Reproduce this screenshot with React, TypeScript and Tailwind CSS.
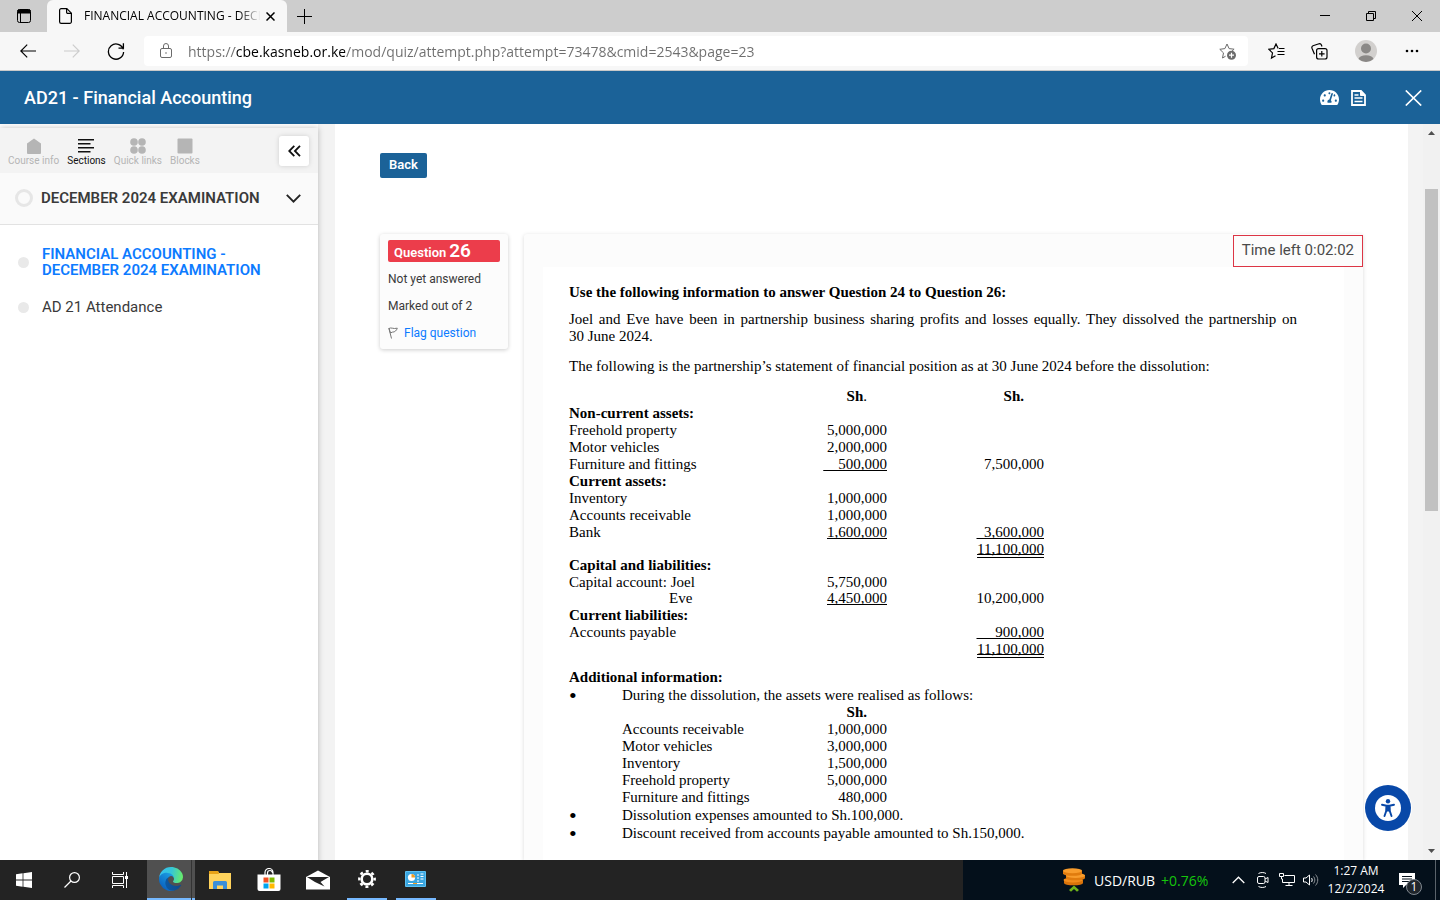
import type { ReactNode } from "react";
import { FaTachometerAlt } from "react-icons/fa";

interface Row {
  label: string;
  a?: string;
  b?: string;
  bold?: boolean;
  indent?: boolean;
  tight?: boolean;
  lineA?: boolean;
  lineB?: "single" | "double";
}

const NB = "\u00a0";

const statement: Row[] = [
  { label: "Non-current assets:", bold: true },
  { label: "Freehold property", a: "5,000,000" },
  { label: "Motor vehicles", a: "2,000,000" },
  { label: "Furniture and fittings", a: NB.repeat(4) + "500,000", b: "7,500,000", lineA: true },
  { label: "Current assets:", bold: true },
  { label: "Inventory", a: "1,000,000" },
  { label: "Accounts receivable", a: "1,000,000" },
  { label: "Bank", a: "1,600,000", b: NB.repeat(2) + "3,600,000", lineA: true, lineB: "single" },
  { label: "", b: "11,100,000", lineB: "double", tight: true },
  { label: "Capital and liabilities:", bold: true },
  { label: "Capital account: Joel", a: "5,750,000", tight: true },
  { label: "Eve", a: "4,450,000", b: "10,200,000", indent: true, lineA: true },
  { label: "Current liabilities:", bold: true },
  { label: "Accounts payable", b: NB.repeat(5) + "900,000", lineB: "single" },
  { label: "", b: "11,100,000", lineB: "double" },
];

const realised = [
  ["Accounts receivable", "1,000,000"],
  ["Motor vehicles", "3,000,000"],
  ["Inventory", "1,500,000"],
  ["Freehold property", "5,000,000"],
  ["Furniture and fittings", "480,000"],
];

function TabStrip() {
  return (
    <div className="flex h-8 shrink-0 items-stretch bg-[#cdcdcd] text-black">
      <button aria-label="Tab actions" className="flex w-[47px] items-center justify-center">
        <svg width="14" height="14" viewBox="0 0 14 14" fill="none" stroke="currentColor">
          <rect x="0.5" y="0.5" width="13" height="13" rx="2" />
          <path d="M1 1h12v3H1z" fill="currentColor" />
          <path d="M3.5 4v9" />
        </svg>
      </button>
      <div role="tab" aria-selected="true" className="flex w-60 items-center rounded-t-md bg-[#f7f7f7] pl-3">
        <svg width="13" height="16" viewBox="0 0 13 16" fill="none" stroke="currentColor" strokeWidth="1.2">
          <path d="M2.5.6h5.3l4.6 4.6v8.6a1.6 1.6 0 0 1-1.6 1.6H2.2a1.6 1.6 0 0 1-1.6-1.6V2.2A1.6 1.6 0 0 1 2.2.6z" />
          <path d="M7.6.8v3.4a1.2 1.2 0 0 0 1.2 1.2h3.4" />
        </svg>
        <span className="ml-3 w-[182px] whitespace-nowrap bg-linear-to-r from-black from-85% to-transparent to-97% bg-clip-text text-[12px] text-transparent">
          FINANCIAL ACCOUNTING - DECE
        </span>
        <button aria-label="Close tab">
          <svg width="9" height="9" viewBox="0 0 9 9" stroke="currentColor" strokeWidth="1.5">
            <path d="M.5.5l8 8M8.5.5l-8 8" />
          </svg>
        </button>
      </div>
      <button aria-label="New tab" className="flex w-[35px] items-center justify-center">
        <svg width="15" height="15" viewBox="0 0 15 15" stroke="currentColor">
          <path d="M0 7.5h15M7.5 0v15" />
        </svg>
      </button>
      <div className="ml-auto flex">
        <button aria-label="Minimize" className="flex w-[46px] items-center justify-center">
          <svg width="10" height="10" viewBox="0 0 10 10" stroke="currentColor"><path d="M0 4.5h10" /></svg>
        </button>
        <button aria-label="Restore" className="flex w-[46px] items-center justify-center">
          <svg width="10" height="10" viewBox="0 0 10 10" fill="none" stroke="currentColor">
            <path d="M.5 2.5h7v7h-7zM2.5 2.5v-2h7v7h-2" />
          </svg>
        </button>
        <button aria-label="Close window" className="flex w-[46px] items-center justify-center">
          <svg width="10" height="10" viewBox="0 0 10 10" stroke="currentColor"><path d="M0 0l10 10M10 0L0 10" /></svg>
        </button>
      </div>
    </div>
  );
}

const STAR = "M8 1l2.1 4.6 5 .6-3.7 3.4M6.6 13.2L3.5 15l1-5.1L.8 6.3l5.1-.7L8 1";

function AddressBar() {
  return (
    <div className="flex h-[39px] shrink-0 items-center border-b border-[#c9c9c9] bg-[#f7f7f7] text-black">
      <button aria-label="Go back" className="ml-5 w-4">
        <svg width="16" height="14" viewBox="0 0 16 14" fill="none" stroke="currentColor" strokeWidth="1.2">
          <path d="M16 7H1M7.2.6L.8 7l6.4 6.4" />
        </svg>
      </button>
      <button aria-label="Go forward" disabled className="ml-7 w-4 text-[#cccccc]">
        <svg width="16" height="14" viewBox="0 0 16 14" fill="none" stroke="currentColor" strokeWidth="1.2">
          <path d="M0 7h15M8.8.6L15.2 7l-6.4 6.4" />
        </svg>
      </button>
      <button aria-label="Reload" className="ml-[27px] w-[18px]">
        <svg width="18" height="18" viewBox="0 0 18 18" fill="none" stroke="currentColor" strokeWidth="1.3">
          <path d="M16.3 7.4A7.6 7.6 0 1 0 16.6 10M16.4 1.2v4.9h-4.9" />
        </svg>
      </button>
      <div className="ml-[19px] flex h-[30px] min-w-0 flex-1 items-center rounded-[4px] bg-white pl-4 pr-[11px]">
        <svg className="shrink-0 text-[#6b6b6b]" width="12" height="16" viewBox="0 0 12 16" fill="none" stroke="currentColor">
          <rect x="0.5" y="5.5" width="11" height="9" rx="1.5" />
          <path d="M3.5 5.5V3a2.5 2.5 0 0 1 5 0v2.5" />
          <circle cx="6" cy="10" r="0.8" fill="currentColor" stroke="none" />
        </svg>
        <input
          aria-label="Address"
          defaultValue="https://cbe.kasneb.or.ke/mod/quiz/attempt.php?attempt=73478&cmid=2543&page=23"
          className="ml-4 min-w-0 flex-1 bg-[linear-gradient(90deg,#6e6e6e_47px,#000_47px,#000_157px,#6e6e6e_157px)] bg-clip-text text-[14px] text-transparent outline-none"
        />
        <button aria-label="Add to favorites" className="text-[#6b6b6b]">
          <svg width="18" height="17" viewBox="0 0 18 17" fill="none" stroke="currentColor">
            <path d={STAR} />
            <circle cx="12.5" cy="12.2" r="4.5" fill="currentColor" stroke="none" />
            <path d="M12.5 9.7v5M10 12.2h5" stroke="#fff" strokeWidth="1.2" />
          </svg>
        </button>
      </div>
      <button aria-label="Favorites" className="ml-5">
        <svg width="17" height="17" viewBox="0 0 17 17" fill="none" stroke="currentColor" strokeWidth="1.2">
          <path d="M10.2 5.6L8 1 5.9 5.6l-5.1.7 3.7 3.6-1 5.1 4-2.2M11 5.5h5.5M9.5 8.5h7M9.5 11.5h7" />
        </svg>
      </button>
      <button aria-label="Collections" className="ml-[26px]">
        <svg width="17" height="17" viewBox="0 0 17 17" fill="none" stroke="currentColor" strokeWidth="1.2">
          <rect x="5.6" y="5.6" width="10.4" height="10.4" rx="2" />
          <path d="M10.8 8v5.6M8 10.8h5.6M3.5 11.3L1 5.2a2 2 0 0 1 1-2.5L8 .8a2 2 0 0 1 2.4 1.2l.6 1.5" />
        </svg>
      </button>
      <button aria-label="Profile" className="ml-[27px]">
        <svg width="22" height="22" viewBox="0 0 22 22">
          <circle cx="11" cy="11" r="11" fill="#d2d0ce" />
          <circle cx="11" cy="8.5" r="5" fill="#8a8886" />
          <path d="M3.5 19a7.7 4.8 0 0 1 15 0 11 11 0 0 1-15 0z" fill="#8a8886" />
        </svg>
      </button>
      <button aria-label="Settings and more" className="ml-7 mr-[21px]">
        <svg width="14" height="4" viewBox="0 0 14 4" fill="currentColor">
          <circle cx="2" cy="2" r="1.3" /><circle cx="7" cy="2" r="1.3" /><circle cx="12" cy="2" r="1.3" />
        </svg>
      </button>
    </div>
  );
}

function CourseHeader() {
  return (
    <header className="flex h-[53px] shrink-0 items-center bg-[#1b6298] pl-6 pr-[18px] font-[Roboto,sans-serif] text-white">
      <h1 className="text-[18px] font-medium">AD21 - Financial Accounting</h1>
      <button aria-label="Dashboard" className="ml-auto">
        <FaTachometerAlt size={19} />
      </button>
      <button aria-label="Report" className="ml-3">
        <svg width="15" height="16" viewBox="0 0 15 16" fill="none" stroke="currentColor" strokeWidth="1.8">
          <path d="M1 1h9l4 4v10H1z" />
          <path d="M9.5 1v4.5H14z" fill="currentColor" strokeWidth="1" />
          <path d="M3.5 5h4M3.5 8h8M3.5 11.5h8" strokeWidth="1.5" />
        </svg>
      </button>
      <button aria-label="Exit activity" className="ml-[39px]">
        <svg width="17" height="16" viewBox="0 0 17 16" stroke="currentColor" strokeWidth="1.7">
          <path d="M.8.5l15.4 15M16.2.5L.8 15.5" />
        </svg>
      </button>
    </header>
  );
}

function SideTab({ label, active, children }: { label: string; active?: boolean; children: ReactNode }) {
  return (
    <button className={active ? "flex flex-col items-center text-[#111111]" : "flex flex-col items-center text-[#b5b5b5]"}>
      <svg width="16" height="16" viewBox="0 0 16 16" fill="currentColor">{children}</svg>
      <span className="whitespace-nowrap text-[10px] leading-[14px]">{label}</span>
    </button>
  );
}

function Sidebar() {
  return (
    <aside className="mt-1 h-full w-[318px] bg-white text-[15px] leading-4 text-[#3a3a3a] shadow-[0_0_6px_rgba(0,0,0,0.25)]">
      <div className="flex h-[45px] items-center bg-[#f3f3f3] pl-2 pr-[9px]">
        <div className="flex gap-2 pt-1">
          <SideTab label="Course info"><path d="M8 0.5l7 5V15a1 1 0 0 1-1 1H2a1 1 0 0 1-1-1V5.5z" /></SideTab>
          <SideTab label="Sections" active>
            <path d="M0 1h16v1.6H0zM0 5h12.5v1.6H0zM0 9h16v1.6H0zM0 13h12.5v1.6H0z" />
          </SideTab>
          <SideTab label="Quick links">
            <circle cx="4" cy="4" r="3.8" /><circle cx="12" cy="4" r="3.8" />
            <circle cx="4" cy="12" r="3.8" /><circle cx="12" cy="12" r="3.8" />
          </SideTab>
          <SideTab label="Blocks"><rect x="0.5" y="0.5" width="15" height="15" rx="1" /></SideTab>
        </div>
        <button aria-label="Collapse" className="ml-auto flex size-[30px] items-center justify-center rounded-[3px] bg-white shadow-[0_0_5px_rgba(0,0,0,0.15)]">
          <svg width="13" height="12" viewBox="0 0 13 12" fill="none" stroke="#111" strokeWidth="1.8">
            <path d="M6.3.8L1.2 6l5.1 5.2M12 .8L6.9 6l5.1 5.2" />
          </svg>
        </button>
      </div>
      <div className="flex h-[52px] items-center border-b border-[#e2e2e2] bg-[#fafafa] pb-px pl-[15px] pr-[17px]">
        <span className="size-[18px] rounded-full border-3 border-[#e6e6e6]" />
        <h2 className="ml-2 whitespace-nowrap font-semibold">DECEMBER 2024 EXAMINATION</h2>
        <svg className="ml-auto" width="15" height="9" viewBox="0 0 15 9" fill="none" stroke="#222" strokeWidth="1.9">
          <path d="M.8.9l6.7 6.7L14.2.9" />
        </svg>
      </div>
      <nav className="flex flex-col gap-[21px] pl-[18px] pr-10 pt-[21px]">
        <a href="#exam" className="flex items-center gap-[13px] font-semibold text-[#0d7bff]">
          <span className="size-[11px] shrink-0 rounded-full bg-[#e9e9e9]" />
          FINANCIAL ACCOUNTING - DECEMBER 2024 EXAMINATION
        </a>
        <a href="#attendance" className="flex items-center gap-[13px]">
          <span className="size-[11px] shrink-0 rounded-full bg-[#e9e9e9]" />
          AD 21 Attendance
        </a>
      </nav>
    </aside>
  );
}

function QuestionInfo() {
  return (
    <section className="flex w-32 shrink-0 flex-col gap-[11px] self-start rounded-[3px] bg-[#fcfcfc] px-2 pb-2 pt-[6px] text-[12px] leading-4 text-[#3a3a3a] shadow-[0_1px_4px_rgba(0,0,0,0.2)]">
      <h3 className="-mb-[2px] flex h-[22px] items-baseline gap-[3px] rounded-[2px] bg-[#ec3d4b] px-[6px] leading-[22px] text-white">
        <span className="text-[13px] font-semibold">Question</span>
        <span className="text-[19px] font-semibold">26</span>
      </h3>
      <p>Not yet answered</p>
      <p>Marked out of 2</p>
      <a href="#flag" className="flex items-center gap-[6px] text-[#0d7bff]">
        <svg width="10" height="12" viewBox="0 0 10 12" fill="none" stroke="#777">
          <path d="M.8 1l2.7 10.500M1 1.500c2-1.500 4 .8 8.300-.3C8.500 3.500 7 5 4.500 5.200" />
          <path d="M1 1.500l1.500 4.500 2-1" />
        </svg>
        Flag question
      </a>
    </section>
  );
}

function lineClass(line?: "single" | "double") {
  if (line === "single") return "underline underline-offset-1 [text-decoration-skip-ink:none]";
  if (line === "double") return "underline decoration-double underline-offset-0 [text-decoration-skip-ink:none]";
  return "";
}

function QuestionText() {
  return (
    <div className="mx-[19px] flex-1 bg-white pl-[26px] pr-[47px] pt-[17px] font-['Liberation_Serif',serif] text-[15px] leading-[17px] text-black">
      <p className="font-bold">Use the following information to answer Question 24 to Question 26:</p>
      <p className="mt-[10px] text-justify">
        {`Joel and Eve have been in partnership business sharing profits and losses equally. They dissolved the partnership on 30${NB}June${NB}2024.`}
      </p>
      <p className="mt-[13px]">
        The following is the partnership’s statement of financial position as at 30 June 2024 before the dissolution:
      </p>

      <table className="mt-[13px] table-fixed border-collapse whitespace-nowrap">
        <colgroup>
          <col className="w-[238px]" />
          <col className="w-20" />
          <col className="w-[157px]" />
        </colgroup>
        <thead>
          <tr>
            <td className="p-0" />
            <th scope="col" className="p-0 pr-5 text-right">Sh<span className="font-normal">.</span></th>
            <th scope="col" className="p-0 pr-5 text-right">Sh.</th>
          </tr>
        </thead>
        <tbody>
          {statement.map((r, i) => (
            <tr key={i} className={r.tight ? "leading-4" : "h-[17px]"}>
              <th
                scope="row"
                className={`p-0 text-left ${r.bold ? "font-bold" : "font-normal"} ${r.indent ? "pl-[100px]" : ""}`}
              >
                {r.label}
              </th>
              <td className="p-0 text-right"><span className={lineClass(r.lineA ? "single" : undefined)}>{r.a}</span></td>
              <td className="p-0 text-right"><span className={lineClass(r.lineB)}>{r.b}</span></td>
            </tr>
          ))}
        </tbody>
      </table>

      <h4 className="mt-[11px] font-bold">Additional information:</h4>
      <ul className="mt-px flex flex-col gap-px">
        <li className="flex">
          <span className="w-[53px] shrink-0 text-[22px]">•</span>
          <div>
            During the dissolution, the assets were realised as follows:
            <table className="table-fixed border-collapse whitespace-nowrap">
              <colgroup>
                <col className="w-[185px]" />
                <col className="w-20" />
              </colgroup>
              <thead>
                <tr>
                  <td className="p-0" />
                  <th scope="col" className="p-0 pr-5 text-right">Sh.</th>
                </tr>
              </thead>
              <tbody>
                {realised.map(([name, amount]) => (
                  <tr key={name}>
                    <th scope="row" className="p-0 text-left font-normal">{name}</th>
                    <td className="p-0 text-right">{amount}</td>
                  </tr>
                ))}
              </tbody>
            </table>
          </div>
        </li>
        <li className="flex">
          <span className="w-[53px] shrink-0 text-[22px]">•</span>
          Dissolution expenses amounted to Sh.100,000.
        </li>
        <li className="flex">
          <span className="w-[53px] shrink-0 text-[22px]">•</span>
          Discount received from accounts payable amounted to Sh.150,000.
        </li>
      </ul>
    </div>
  );
}

function Scrollbar() {
  return (
    <div className="flex w-[17px] shrink-0 flex-col items-center bg-[#f1f1f1] text-[#505050]">
      <svg width="17" height="17" viewBox="0 0 17 17" fill="currentColor"><path d="M5 11l3.5-4L12 11z" /></svg>
      <div className="flex-[48]" />
      <div className="w-[13px] flex-[322] bg-[#c1c1c1]" />
      <div className="flex-[332]" />
      <svg width="17" height="17" viewBox="0 0 17 17" fill="currentColor"><path d="M5 6l3.5 4L12 6z" /></svg>
    </div>
  );
}

function TaskButton({ label, open, active, children }: { label: string; open?: boolean; active?: boolean; children: ReactNode }) {
  return (
    <button
      aria-label={label}
      className={`relative flex flex-col items-center ${active ? "w-12 bg-[#505050]" : "w-[49px]"}`}
    >
      <span className="flex flex-1 items-center">{children}</span>
      {(open || active) && <span className={`h-[2px] bg-[#76b9ff] ${active ? "w-full" : "w-10"}`} />}
      {active && <span className="absolute right-[3px] top-0 h-full w-px bg-[#333333]" />}
    </button>
  );
}

function EdgeLogo() {
  return (
    <svg width="24" height="24" viewBox="0 0 256 256">
      <defs>
        <linearGradient id="edgeA" x1="60" y1="180" x2="240" y2="180" gradientUnits="userSpaceOnUse">
          <stop offset="0" stopColor="#0c59a4" /><stop offset="1" stopColor="#114a8b" />
        </linearGradient>
        <linearGradient id="edgeB" x1="150" y1="90" x2="40" y2="230" gradientUnits="userSpaceOnUse">
          <stop offset="0" stopColor="#1b9de2" /><stop offset="1" stopColor="#0a62c0" />
        </linearGradient>
        <linearGradient id="edgeC" x1="10" y1="60" x2="250" y2="110" gradientUnits="userSpaceOnUse">
          <stop offset="0" stopColor="#35c1f1" /><stop offset="0.5" stopColor="#36c6d7" /><stop offset="1" stopColor="#66eb6e" />
        </linearGradient>
      </defs>
      <g transform="translate(-4.63 -4.92)">
        <path fill="url(#edgeA)" d="M235.68 195.46a93.73 93.73 0 0 1-10.54 4.71 101.87 101.87 0 0 1-35.9 6.46c-47.32 0-88.54-32.55-88.54-74.32A31.48 31.48 0 0 1 117.13 105c-42.8 1.8-53.8 46.4-53.8 72.53 0 73.88 68.09 81.37 82.76 81.37 7.91 0 19.84-2.3 27-4.56l1.31-.44a128.34 128.34 0 0 0 66.6-52.8 4 4 0 0 0-5.32-5.64z" />
        <path fill="url(#edgeB)" d="M110.34 246.34A79.2 79.2 0 0 1 87.6 225a80.72 80.72 0 0 1 29.53-120c3.12-1.47 8.45-4.13 15.54-4a32.35 32.35 0 0 1 25.69 13 31.88 31.88 0 0 1 6.36 18.66c0-.21 24.46-79.6-80-79.6-43.9 0-80 41.66-80 78.21a130.15 130.15 0 0 0 12.11 56 128 128 0 0 0 156.38 67.11 75.55 75.55 0 0 1-62.78-8z" />
        <path fill="url(#edgeC)" d="M156.94 153.78c-.81 1.05-3.3 2.5-3.3 5.66 0 2.61 1.7 5.12 4.72 7.23 14.38 10 41.49 8.68 41.56 8.68a59.56 59.56 0 0 0 30.27-8.35 61.38 61.38 0 0 0 30.43-52.88c.26-22.41-8-37.31-11.34-43.91-21.19-41.45-66.93-65.29-116.67-65.29a128 128 0 0 0-128 126.2c.48-36.54 36.8-66.05 80-66.05 3.5 0 23.46.34 42 10.07 16.34 8.58 24.9 18.94 30.85 29.21 6.18 10.67 7.28 24.15 7.28 29.52 0 5.37-2.74 13.33-7.8 19.91z" />
      </g>
    </svg>
  );
}

function Taskbar() {
  return (
    <footer className="flex h-10 shrink-0 bg-[#232323] text-white">
      <button aria-label="Start" className="flex w-12 items-center justify-center">
        <svg width="16" height="16" viewBox="0 0 16 16" fill="currentColor">
          <path d="M0 2.2L6.6 1.3v6.3H0zM7.4 1.2L16 0v7.6H7.4zM0 8.4h6.6v6.3L0 13.8zM7.4 8.4H16V16l-8.6-1.2z" />
        </svg>
      </button>
      <button aria-label="Search" className="flex w-12 items-center justify-center">
        <svg width="16" height="16" viewBox="0 0 16 16" fill="none" stroke="currentColor" strokeWidth="1.2">
          <circle cx="10.5" cy="5.5" r="4.9" /><path d="M7 9L.5 15.5" />
        </svg>
      </button>
      <button aria-label="Task view" className="mr-[3px] flex w-12 items-center justify-center">
        <svg width="17" height="16" viewBox="0 0 17 16" fill="none" stroke="currentColor">
          <path d="M.5 0v2.5h11V0M.5 16v-2.5h11V16M.5 4.5h11v7H.5zM14.5 0v16" />
          <path d="M13 4h3v3h-3z" fill="currentColor" stroke="none" />
        </svg>
      </button>
      <TaskButton label="Microsoft Edge" active><EdgeLogo /></TaskButton>
      <TaskButton label="File Explorer">
        <svg width="22" height="18" viewBox="0 0 22 18">
          <path d="M0 0h9l1 2h12v16H0z" fill="#ffd35c" />
          <path d="M0 0h9l1 3H0z" fill="#e8a317" />
          <path d="M4 18v-6.5A1.5 1.5 0 0 1 5.5 10h11a1.5 1.5 0 0 1 1.5 1.5V18h-4v-3.5H8V18z" fill="#3a8fd8" />
        </svg>
      </TaskButton>
      <TaskButton label="Microsoft Store">
        <svg width="24" height="24" viewBox="0 0 24 24" fill="none">
          <path d="M8 7V4.500a4 4 0 0 1 8 0V7M10.500 7V5a2.500 2.500 0 0 1 5 0" stroke="#fff" strokeWidth="1.2" />
          <path d="M.5 6.5h23V21a2 2 0 0 1-2 2h-19a2 2 0 0 1-2-2z" fill="#fff" />
          <path d="M6.5 9.5h5v5h-5z" fill="#f25022" /><path d="M12.5 9.5h5v5h-5z" fill="#7fba00" />
          <path d="M6.5 15.5h5v5h-5z" fill="#00a4ef" /><path d="M12.5 15.5h5v5h-5z" fill="#ffb900" />
        </svg>
      </TaskButton>
      <TaskButton label="Mail">
        <svg width="24" height="20" viewBox="0 0 24 20">
          <path d="M0 7L12 .5 24 7v12.5H0z" fill="#fff" />
          <path d="M1 7h22l-8.5 5 4 4.5L9 12z" fill="#232323" />
        </svg>
      </TaskButton>
      <TaskButton label="Settings" open>
        <svg width="18" height="18" viewBox="0 0 18 18" fill="none" stroke="currentColor">
          <circle cx="9" cy="9" r="5.3" strokeWidth="2.6" />
          <circle cx="9" cy="9" r="7.7" strokeWidth="2.4" strokeDasharray="3.02 3.02" strokeDashoffset="1.51" />
        </svg>
      </TaskButton>
      <TaskButton label="Control Panel" open>
        <svg width="21" height="16" viewBox="0 0 21 16">
          <rect width="21" height="16" rx="1" fill="#5bc0f2" />
          <rect x="1" y="1" width="19" height="14" fill="#3aa5e0" />
          <circle cx="6.5" cy="6.5" r="3.6" fill="#fff" />
          <path d="M6.5 6.5V2.900a3.600 3.600 0 0 1 3.600 3.600z" fill="#f39c1f" />
          <path d="M12 4h2M12 7h2M12 10h2M15.500 3h3M15.500 5.500h3M15.500 8h3M3 12.500h15" stroke="#fff" />
          <path d="M8 12.5h4" stroke="#f39c1f" />
        </svg>
      </TaskButton>

      <div className="ml-auto flex w-[477px] items-center bg-[#04101b] pl-[100px]">
        <svg width="22" height="24" viewBox="0 0 22 24">
          <path d="M1 11.5h19v3.500a9.500 2.300 0 0 1-19 0z" fill="#d9730a" />
          <ellipse cx="10" cy="12" rx="9.5" ry="2.5" fill="#f28c1b" />
          <path d="M3 7h19v3a9.500 2.300 0 0 1-19 0z" fill="#e07b0e" />
          <ellipse cx="12.5" cy="7.5" rx="9.5" ry="2.5" fill="#f89c2c" />
          <path d="M0 2.500h19v3a9.500 2.300 0 0 1-19 0z" fill="#e07b0e" />
          <ellipse cx="9.5" cy="2.8" rx="9.5" ry="2.5" fill="#f89c2c" />
          <path d="M11 17.5l5 4.5-2 1.8-3-2.8-3 2.8L6 22z" fill="#6fb31b" />
        </svg>
        <span className="ml-[9px] w-[59px] whitespace-nowrap text-[14px]">USD/RUB</span>
        <span className="ml-[8px] w-12 whitespace-nowrap text-[14px] text-[#16c60c]">+0.76%</span>
        <svg className="ml-[23px] shrink-0" width="13" height="8" viewBox="0 0 13 8" fill="none" stroke="currentColor" strokeWidth="1.3">
          <path d="M.7 7l5.8-5.800L12.300 7" />
        </svg>
        <svg className="ml-3 shrink-0" width="12" height="16" viewBox="0 0 12 16" fill="none" stroke="currentColor">
          <rect x="0.5" y="4.5" width="7.5" height="7" rx="1.5" />
          <path d="M8 7l3-1.500v5L8 9M1.500 1.500c2-1.300 5.500-1.300 7.500 0M1.500 14.500c2 1.300 5.500 1.300 7.500 0" />
        </svg>
        <svg className="ml-[10px] shrink-0" width="16" height="14" viewBox="0 0 16 14" fill="none" stroke="currentColor">
          <path d="M5.500 2.500h10v7H3.500V6M10 9.500v3M6.500 12.500h7M.5.500h4v3h-4zM2.500 3.500V6h1" />
        </svg>
        <svg className="ml-2 shrink-0" width="16" height="14" viewBox="0 0 16 14" fill="none" stroke="currentColor">
          <path d="M.5 5h2.500L6.500 2v10L3 9H.5zM8.500 5c.9 1 .9 3 0 4" />
          <path d="M10.500 3.500c1.800 2 1.800 5 0 7M12.500 1.500c3 3.300 3 7.700 0 11" stroke="#8a8f94" />
        </svg>
        <div className="ml-2 w-[58px] whitespace-nowrap text-center text-[12px] leading-[18px]">
          <div>1:27 AM</div>
          <div>12/2/2024</div>
        </div>
        <button aria-label="Notifications, 1 new" className="relative ml-[14px]">
          <svg width="16" height="15" viewBox="0 0 16 15">
            <path d="M0 0h16v12H7l-3 3v-3H0z" fill="#fff" />
            <path d="M3 3.500h10M3 6h10M3 8.500h7" stroke="#04101b" />
          </svg>
          <span className="absolute -bottom-[7px] -right-[7px] flex size-4 items-center justify-center rounded-full border border-[#808890] bg-[#20262c] text-[12px]">
            1
          </span>
        </button>
        <span className="ml-auto mr-1 h-full w-px bg-[#5a636b]" />
      </div>
    </footer>
  );
}

export default function App() {
  return (
    <div className="flex h-screen flex-col overflow-hidden bg-white font-['Open_Sans','Noto_Sans',sans-serif]">
      <TabStrip />
      <AddressBar />
      <CourseHeader />
      <div className="relative flex min-h-0 flex-1 overflow-hidden bg-[#f3f3f3] font-[Roboto,sans-serif]">
        <div className="shrink-0 bg-white">
          <Sidebar />
        </div>
        <main className="ml-[17px] mr-[15px] flex min-w-0 flex-1 flex-col bg-white px-[45px] pt-[29px]">
          <button className="h-[25px] self-start rounded-[2px] bg-[#1b6298] px-[9px] pb-px text-[13px] font-semibold text-white">
            Back
          </button>
          <div className="mt-14 flex min-h-0 flex-1 gap-4">
            <QuestionInfo />
            <section className="flex min-w-0 flex-1 flex-col rounded-t-[3px] bg-[#fcfcfc] shadow-[0_1px_4px_rgba(0,0,0,0.15)]">
              <div className="flex justify-end pt-px">
                <div role="timer" className="border border-[#dc3545] px-2 pb-[2px] text-[15px] leading-7 text-[#4a4a4a]">
                  Time left 0:02:02
                </div>
              </div>
              <QuestionText />
            </section>
          </div>
        </main>
        <Scrollbar />
        <button
          aria-label="Accessibility menu"
          className="absolute bottom-[29px] right-[29px] flex size-[46px] items-center justify-center rounded-full bg-[#0848a8] shadow-[0_0_0_1px_#fff]"
        >
          <svg width="26" height="26" viewBox="0 0 26 26">
            <circle cx="13" cy="13" r="13" fill="#fff" />
            <circle cx="13" cy="6.3" r="2.2" fill="#0848a8" />
            <path d="M7 9.700l4.500 1h3l4.500-1M11.500 11l-.3 5-1.700 5M14.500 11l.3 5 1.700 5" stroke="#0848a8" strokeWidth="1.9" fill="none" strokeLinecap="round" />
            <path d="M10.800 10h4.400v6.500h-4.400z" fill="#0848a8" />
          </svg>
        </button>
      </div>
      <Taskbar />
    </div>
  );
}
